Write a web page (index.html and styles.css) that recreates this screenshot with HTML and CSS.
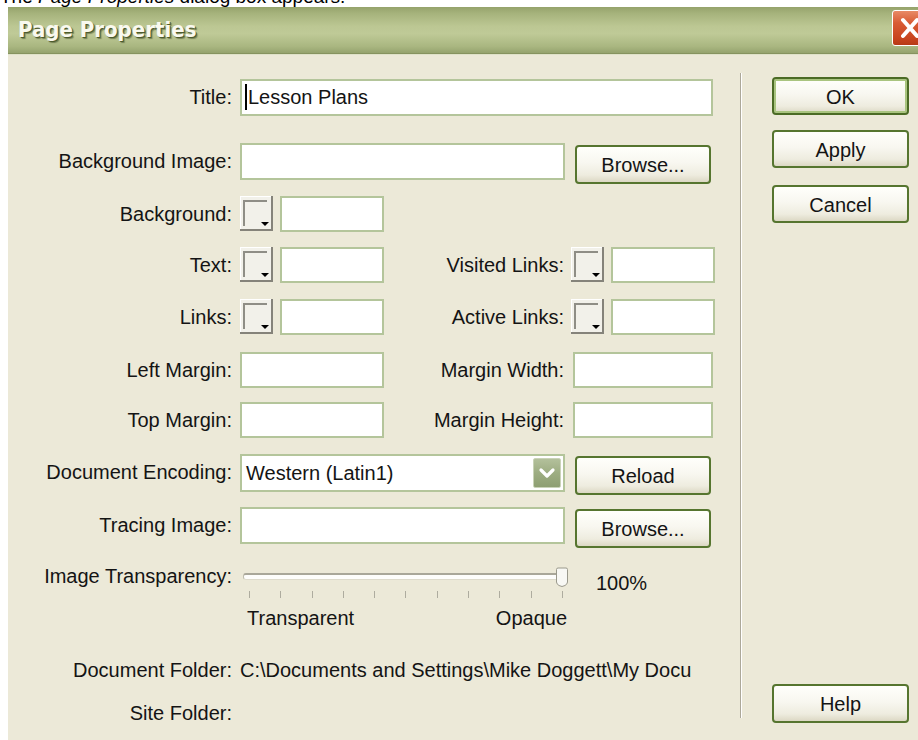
FILE: index.html
```html
<!DOCTYPE html>
<html lang="en">
<head>
<meta charset="utf-8">
<title>Page Properties</title>
<link rel="stylesheet" href="styles.css">
</head>
<body>
<div class="caption"><p>The <em>Page Properties</em> dialog box appears.</p></div>

<div class="dialog">
  <div class="titlebar">
    <span class="title">Page Properties</span>
    <button class="close" type="button" aria-label="Close">
      <svg width="34" height="34" viewBox="0 0 34 34"><path d="M10 9 L24 25 M24 9 L10 25" stroke="#fff" stroke-width="4" stroke-linecap="round"/></svg>
    </button>
  </div>

  <div class="dialog-body">
    <div class="props">
      <div class="row r-title">
        <span class="lbl">Title:</span>
        <div class="field w-title"><span class="caret"></span>Lesson Plans</div>
      </div>

      <div class="row r-bgimg">
        <span class="lbl">Background Image:</span>
        <div class="field w-path"></div>
        <button class="btn btn-side" type="button">Browse...</button>
      </div>

      <div class="row r-bg sm">
        <span class="lbl">Background:</span>
        <div class="group">
          <span class="swatch"><svg width="33" height="35" viewBox="0 0 33 35"><rect width="33" height="35" fill="#f2f1ea"/><rect x="0" y="0" width="33" height="1" fill="#fff"/><rect x="0" y="0" width="1" height="35" fill="#fff"/><rect x="31" y="0" width="2" height="35" fill="#85837a"/><rect x="0" y="33" width="33" height="2" fill="#85837a"/><rect x="3" y="4" width="24" height="2" fill="#8f8e86"/><rect x="3" y="4" width="2" height="26" fill="#8f8e86"/><polygon points="21,26 29,26 25,30" fill="#000"/></svg></span>
          <div class="field w-hex"></div>
        </div>
      </div>

      <div class="row r-text sm">
        <span class="lbl">Text:</span>
        <div class="group">
          <span class="swatch"><svg width="33" height="35" viewBox="0 0 33 35"><rect width="33" height="35" fill="#f2f1ea"/><rect x="0" y="0" width="33" height="1" fill="#fff"/><rect x="0" y="0" width="1" height="35" fill="#fff"/><rect x="31" y="0" width="2" height="35" fill="#85837a"/><rect x="0" y="33" width="33" height="2" fill="#85837a"/><rect x="3" y="4" width="24" height="2" fill="#8f8e86"/><rect x="3" y="4" width="2" height="26" fill="#8f8e86"/><polygon points="21,26 29,26 25,30" fill="#000"/></svg></span>
          <div class="field w-hex"></div>
        </div>
        <span class="lbl2">Visited Links:</span>
        <div class="group">
          <span class="swatch"><svg width="33" height="35" viewBox="0 0 33 35"><rect width="33" height="35" fill="#f2f1ea"/><rect x="0" y="0" width="33" height="1" fill="#fff"/><rect x="0" y="0" width="1" height="35" fill="#fff"/><rect x="31" y="0" width="2" height="35" fill="#85837a"/><rect x="0" y="33" width="33" height="2" fill="#85837a"/><rect x="3" y="4" width="24" height="2" fill="#8f8e86"/><rect x="3" y="4" width="2" height="26" fill="#8f8e86"/><polygon points="21,26 29,26 25,30" fill="#000"/></svg></span>
          <div class="field w-hex"></div>
        </div>
      </div>

      <div class="row r-links sm">
        <span class="lbl">Links:</span>
        <div class="group">
          <span class="swatch"><svg width="33" height="35" viewBox="0 0 33 35"><rect width="33" height="35" fill="#f2f1ea"/><rect x="0" y="0" width="33" height="1" fill="#fff"/><rect x="0" y="0" width="1" height="35" fill="#fff"/><rect x="31" y="0" width="2" height="35" fill="#85837a"/><rect x="0" y="33" width="33" height="2" fill="#85837a"/><rect x="3" y="4" width="24" height="2" fill="#8f8e86"/><rect x="3" y="4" width="2" height="26" fill="#8f8e86"/><polygon points="21,26 29,26 25,30" fill="#000"/></svg></span>
          <div class="field w-hex"></div>
        </div>
        <span class="lbl2">Active Links:</span>
        <div class="group">
          <span class="swatch"><svg width="33" height="35" viewBox="0 0 33 35"><rect width="33" height="35" fill="#f2f1ea"/><rect x="0" y="0" width="33" height="1" fill="#fff"/><rect x="0" y="0" width="1" height="35" fill="#fff"/><rect x="31" y="0" width="2" height="35" fill="#85837a"/><rect x="0" y="33" width="33" height="2" fill="#85837a"/><rect x="3" y="4" width="24" height="2" fill="#8f8e86"/><rect x="3" y="4" width="2" height="26" fill="#8f8e86"/><polygon points="21,26 29,26 25,30" fill="#000"/></svg></span>
          <div class="field w-hex"></div>
        </div>
      </div>

      <div class="row r-left sm">
        <span class="lbl">Left Margin:</span>
        <div class="field w-margin"></div>
        <span class="lbl2">Margin Width:</span>
        <div class="field w-margin2"></div>
      </div>

      <div class="row r-top sm">
        <span class="lbl">Top Margin:</span>
        <div class="field w-margin"></div>
        <span class="lbl2">Margin Height:</span>
        <div class="field w-margin2"></div>
      </div>

      <div class="row r-enc">
        <span class="lbl">Document Encoding:</span>
        <div class="field select">Western (Latin1)
          <span class="drop"><svg width="28" height="30" viewBox="0 0 28 30"><path d="M8 12 L14 18 L20 12" fill="none" stroke="#fff" stroke-width="3.2" stroke-linecap="round" stroke-linejoin="round"/></svg></span>
        </div>
        <button class="btn btn-side" type="button">Reload</button>
      </div>

      <div class="row r-trace">
        <span class="lbl">Tracing Image:</span>
        <div class="field w-path"></div>
        <button class="btn btn-side" type="button">Browse...</button>
      </div>

      <div class="row r-slider">
        <span class="lbl lbl-slider">Image Transparency:</span>
        <div class="slider">
          <div class="track-wrap">
            <div class="track"></div>
            <svg class="thumb" width="12" height="20" viewBox="0 0 12 20"><path d="M2 1 H10 A1.5 1.5 0 0 1 11.5 2.5 V15 Q11.5 17 9 18.5 L6 19.5 L3 18.5 Q0.5 17 0.5 15 V2.5 A1.5 1.5 0 0 1 2 1 Z" fill="#f8f8f4" stroke="#9a998c" stroke-width="1"/></svg>
          </div>
          <div class="ticks">
            <i></i><i></i><i></i><i></i><i></i><i></i><i></i><i></i><i></i><i></i><i></i>
          </div>
          <div class="scale"><span>Transparent</span><span>Opaque</span></div>
        </div>
        <span class="pct">100%</span>
      </div>

      <div class="row r-docfolder">
        <span class="lbl lbl-info">Document Folder:</span>
        <span class="info">C:\Documents and Settings\Mike Doggett\My Docu</span>
      </div>

      <div class="row r-sitefolder">
        <span class="lbl lbl-info">Site Folder:</span>
        <span class="info"></span>
      </div>
    </div>

    <div class="divider"></div>

    <div class="actions">
      <button class="btn btn-default" type="button">OK</button>
      <button class="btn btn-apply" type="button">Apply</button>
      <button class="btn btn-cancel" type="button">Cancel</button>
      <button class="btn btn-help" type="button">Help</button>
    </div>
  </div>
</div>
</body>
</html>
```

FILE: styles.css
```css
* { box-sizing: border-box; }

html, body { margin: 0; padding: 0; }

body {
  width: 918px;
  height: 740px;
  overflow: hidden;
  background: #fff;
  color: #000;
  font-family: "Liberation Sans", Arial, sans-serif;
}

/* document text line running above the dialog */
.caption { height: 7px; overflow: hidden; }
.caption p {
  margin: -14px 0 0 0;
  font-size: 19px;
  line-height: 22px;
  white-space: nowrap;
}

/* dialog window */
.dialog {
  margin-left: 8px;
  width: 920px;
  height: 733px;
  background: #ece9d8;
  display: flex;
  flex-direction: column;
}

.titlebar {
  flex: none;
  height: 47px;
  display: flex;
  align-items: flex-start;
  justify-content: space-between;
  padding-left: 10px;
  background: linear-gradient(to bottom, #95a36b 0%, #a6b37c 14%, #bcc793 42%, #bfca97 58%, #a9b680 86%, #95a36e 100%);
  border-bottom: 1px solid #86935f;
  box-shadow: 0 1px 0 #dfe2c9;
}

.title {
  margin-top: 10px;
  font-family: "DejaVu Sans Condensed", "DejaVu Sans", sans-serif;
  font-weight: bold;
  font-size: 22px;
  line-height: 26px;
  color: #f9f9ef;
  text-shadow: 1px 1px 0 #4d5b2d, 2px 2px 1px rgba(60, 70, 30, 0.5);
}

.close {
  margin-top: 3px;
  width: 36px;
  height: 36px;
  padding: 0;
  border: 1px solid #fff;
  border-radius: 3px;
  background: linear-gradient(to bottom, #e88a66 0%, #d95b34 35%, #c8441e 80%, #b73a17 100%);
  display: flex;
  align-items: center;
  justify-content: center;
}

.dialog-body {
  flex: 1;
  display: flex;
  align-items: flex-start;
}

/* form column */
.props {
  flex: none;
  width: 732px;
  padding-top: 25px;
  display: flex;
  flex-direction: column;
}

.row {
  flex: none;
  display: flex;
  align-items: flex-start;
}

.lbl {
  flex: none;
  width: 224px;
  margin-right: 8px;
  text-align: right;
  white-space: nowrap;
  font-size: 20px;
  line-height: 37px;
  color: #141414;
}

.lbl2 {
  flex: none;
  width: 180px;
  margin-right: 7px;
  text-align: right;
  white-space: nowrap;
  font-size: 20px;
  line-height: 36px;
  color: #141414;
}

.sm .lbl { line-height: 36px; }

.field {
  flex: none;
  position: relative;
  height: 37px;
  background: #fff;
  border: 2px solid #b4c59b;
  font-size: 20px;
  line-height: 33px;
  padding-left: 6px;
  white-space: nowrap;
  color: #141414;
}

.sm .field { height: 36px; line-height: 32px; }

.w-title { width: 473px; }
.w-path { width: 325px; }
.w-hex { width: 104px; }
.w-margin { width: 144px; }
.w-margin2 { width: 140px; margin-left: 2px; }

.caret {
  display: inline-block;
  width: 2px;
  height: 26px;
  background: #000;
  vertical-align: -6px;
  margin-right: 1px;
  margin-left: -3px;
}

.group {
  flex: none;
  display: flex;
  gap: 7px;
  width: 144px;
}

.swatch {
  flex: none;
  width: 33px;
  height: 35px;
  display: block;
}
.swatch svg { display: block; }

/* row spacing */
.r-bgimg { margin-top: 27px; }
.r-bg { margin-top: 12px; }
.r-text { margin-top: 15px; }
.r-links { margin-top: 16px; }
.r-left { margin-top: 17px; }
.r-top { margin-top: 14px; }
.r-enc { margin-top: 16px; }
.r-trace { margin-top: 12px; }
.r-slider { margin-top: 16px; }
.r-docfolder { margin-top: 29px; }
.r-sitefolder { margin-top: 19px; }

.select {
  width: 325px;
  height: 38px;
  line-height: 34px;
  padding-left: 4px;
}

.drop {
  position: absolute;
  right: 2px;
  top: 2px;
  width: 28px;
  height: 30px;
  border-radius: 2px;
  background: linear-gradient(to bottom, #b3c09b 0%, #9dad82 50%, #8e9f72 100%);
  border: 1px solid #c9d3b7;
}
.drop svg { display: block; margin: -1px; }

/* buttons */
.btn {
  height: 39px;
  padding: 0;
  border: 2px solid #56752f;
  border-radius: 4px;
  background: linear-gradient(to bottom, #fffffb 0%, #f8f7f0 45%, #eeecdf 80%, #dcd8c4 100%);
  font-family: "Liberation Sans", Arial, sans-serif;
  font-size: 20px;
  color: #141414;
  padding-top: 2px;
}

.btn-side {
  flex: none;
  width: 136px;
  margin-left: 10px;
  margin-top: 2px;
}

/* slider */
.lbl-slider { line-height: 24px; }

.slider {
  flex: none;
  width: 330px;
  display: flex;
  flex-direction: column;
}

.track-wrap {
  position: relative;
  height: 24px;
  padding-top: 9px;
}

.track {
  margin-left: 3px;
  width: 322px;
  height: 7px;
  background: #fdfdfb;
  border-top: 2px solid #a9a799;
  border-bottom: 1px solid #dedbcc;
  border-left: 1px solid #bdbbad;
  border-radius: 3px 0 0 3px;
}

.thumb {
  position: absolute;
  left: 316px;
  top: 3px;
}

.ticks {
  margin-top: 3px;
  margin-left: 9px;
  width: 314px;
  height: 7px;
  display: flex;
  justify-content: space-between;
}
.ticks i {
  display: block;
  width: 1px;
  height: 7px;
  background: #aeac9f;
}

.scale {
  margin-top: 9px;
  display: flex;
  justify-content: space-between;
  padding: 0 3px 0 7px;
  font-size: 20px;
  line-height: 22px;
  color: #141414;
}

.pct {
  margin-left: 26px;
  margin-top: 7px;
  font-size: 20px;
  line-height: 24px;
  color: #141414;
}

/* folder info */
.lbl-info { line-height: 24px; }
.info {
  flex: none;
  width: 472px;
  overflow: hidden;
  white-space: nowrap;
  font-size: 20px;
  line-height: 24px;
  color: #141414;
}

/* separator and command buttons */
.divider {
  flex: none;
  width: 2px;
  height: 645px;
  margin-top: 19px;
  border-left: 1px solid #aca899;
  border-right: 1px solid #fff;
}

.actions {
  flex: none;
  width: 137px;
  height: 669px;
  margin-left: 30px;
  padding-top: 23px;
  display: flex;
  flex-direction: column;
}

.actions .btn { width: 137px; height: 38px; }

.btn-default {
  border-color: #4b6b25;
  box-shadow: inset 0 0 0 2px #a9c47f;
}

.btn-apply { margin-top: 15px; }
.btn-cancel { margin-top: 17px; }
.actions .btn-help { margin-top: auto; height: 39px; }
```
